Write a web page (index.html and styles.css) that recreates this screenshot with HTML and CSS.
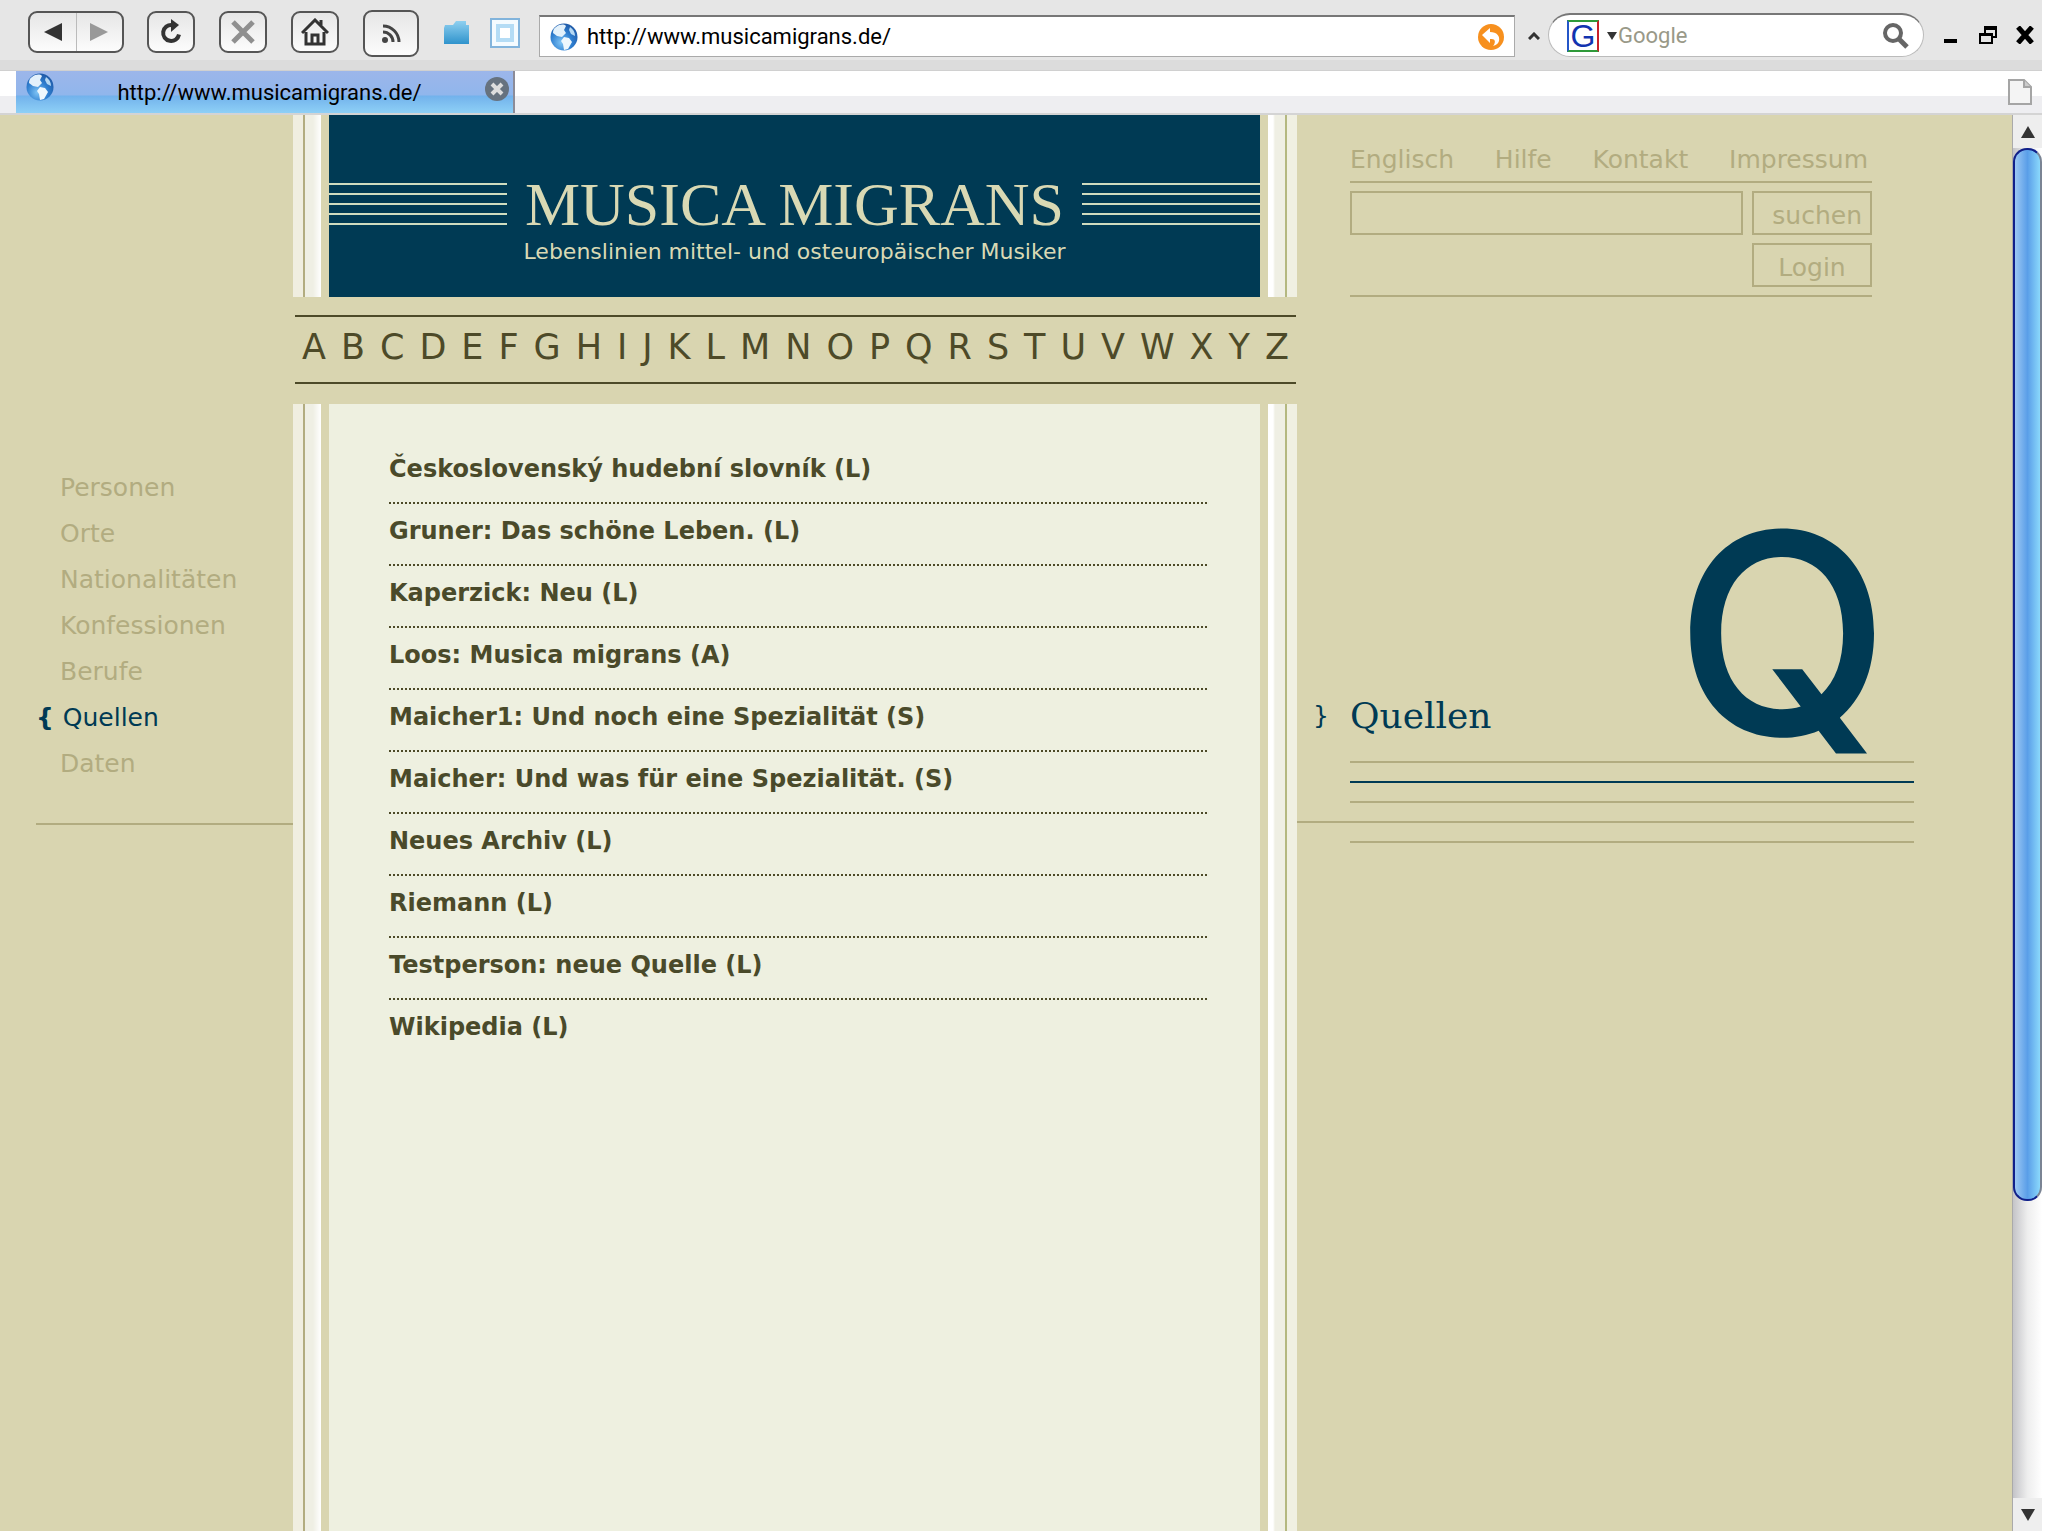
FILE: index.html
```
<!DOCTYPE html>
<html lang="de">
<head>
    <meta charset="UTF-8">
    <meta name="viewport" content="width=device-width, initial-scale=1.0">
    <title>Musica Migrans - Quellen</title>
    <link rel="stylesheet" href="styles.css">
</head>
<body>
    <!-- shared globe icon -->
    <svg class="defs" width="0" height="0" aria-hidden="true">
        <defs>
            <radialGradient id="globeFill" cx="0.4" cy="0.7" r="0.8">
                <stop offset="0" stop-color="#7fc4f5"/>
                <stop offset="0.5" stop-color="#2f7fd0"/>
                <stop offset="1" stop-color="#1a4f9c"/>
            </radialGradient>
            <linearGradient id="folderFill" x1="0" y1="0" x2="0" y2="1">
                <stop offset="0" stop-color="#8fd0f0"/>
                <stop offset="1" stop-color="#2f93cc"/>
            </linearGradient>
            <symbol id="globe" viewBox="0 0 28 28">
                <circle cx="14" cy="14" r="13.5" fill="url(#globeFill)"/>
                <path d="M6 4c4-3 8-3 10-1l-2 4 2 3-4 4-5-1-4-3c0-3 1-5 3-6z" fill="#e3f1fb"/>
                <path d="M14 14l5 1 3 4-4 7-4 1-1-6-2-3z" fill="#eef7fd"/>
                <path d="M20 4c3 2 5 5 5 9l-4-2-2-4z" fill="#b5d8f3"/>
            </symbol>
        </defs>
    </svg>

    <div class="toolbar">
        <div class="nav-group">
            <button type="button" aria-label="Back"><svg width="18" height="18" viewBox="0 0 18 18"><path d="M0 9L18 0v18z" fill="#333"/></svg></button>
            <button type="button" aria-label="Forward"><svg width="18" height="18" viewBox="0 0 18 18"><path d="M18 9L0 0v18z" fill="#999"/></svg></button>
        </div>
        <button type="button" class="tool" aria-label="Reload">
            <svg width="24" height="26" viewBox="0 0 24 26"><path d="M20 15.500A8 8 0 1 1 13 6" fill="none" stroke="#333" stroke-width="4"/><path d="M12 0l8 6-8 7z" fill="#333"/></svg>
        </button>
        <button type="button" class="tool" aria-label="Stop">
            <svg width="24" height="24" viewBox="0 0 24 24"><path d="M2 2l20 20M22 2L2 22" stroke="#8f8f8f" stroke-width="5"/></svg>
        </button>
        <button type="button" class="tool" aria-label="Home">
            <svg width="28" height="28" viewBox="0 0 28 28" fill="none" stroke="#333" stroke-width="3"><path d="M1 15L14 2l13 13M5 14v12h18V14M11 26v-9h6v9M20 7V2"/></svg>
        </button>
        <button type="button" class="tool feed" aria-label="Feeds">
            <svg width="20" height="20" viewBox="0 0 20 20" fill="none" stroke="#444" stroke-width="3"><path d="M2 2a16 16 0 0 1 16 16M2 8a10 10 0 0 1 10 10"/><circle cx="4" cy="16" r="3" fill="#444" stroke="none"/></svg>
        </button>
        <button type="button" class="plain" aria-label="Bookmarks">
            <svg width="28" height="26" viewBox="0 0 28 26"><path d="M2 5h8l3-4h10v4h3v19H1V8z" fill="url(#folderFill)"/></svg>
        </button>
        <button type="button" class="plain" aria-label="Panel">
            <svg width="32" height="32" viewBox="0 0 32 32"><path d="M2 2h28v28H2z" fill="#f4fbff" stroke="#82b4dc" stroke-width="2"/><path d="M9 9h14v14H9z" fill="#fff" stroke="#b4dcf5" stroke-width="4"/></svg>
        </button>
        <div class="address">
            <svg width="28" height="28"><use href="#globe"/></svg>
            <input type="text" aria-label="Address" value="http://www.musicamigrans.de/">
            <button type="button" aria-label="Go">
                <svg width="26" height="26" viewBox="0 0 26 26"><circle cx="13" cy="13" r="13" fill="#f7901e"/><path d="M4 11l8-7v4c7 0 10 4 9 9-1 3-3 4-6 5 2-2 4-8-3-7v4z" fill="#fff"/></svg>
            </button>
        </div>
        <svg class="caret" width="12" height="8" viewBox="0 0 12 8"><path d="M1 7l5-5 5 5" fill="none" stroke="#333" stroke-width="3"/></svg>
        <div class="search">
            <span class="engine">G</span>
            <svg width="10" height="8" viewBox="0 0 10 8"><path d="M0 0h10L5 8z" fill="#333"/></svg>
            <input type="text" aria-label="Search" placeholder="Google">
            <svg width="26" height="26" viewBox="0 0 26 26" fill="none" stroke="#666"><circle cx="10" cy="10" r="8" stroke-width="4"/><path d="M16 16l8 8" stroke-width="5"/></svg>
        </div>
        <div class="window-buttons">
            <button type="button" aria-label="Minimize"><svg width="18" height="18" viewBox="0 0 18 18"><path d="M2 13h13v4H2z"/></svg></button>
            <button type="button" aria-label="Restore"><svg width="18" height="18" viewBox="0 0 18 18"><path d="M6 8V2h11v9h-4" fill="none" stroke="#000" stroke-width="2"/><path d="M5 0h13v4H5z"/><path d="M1 8h12v9H1z" fill="none" stroke="#000" stroke-width="2"/><path d="M0 7h14v3H0z"/></svg></button>
            <button type="button" aria-label="Close"><svg width="18" height="18" viewBox="0 0 18 18"><path d="M2 1l14 16M16 1L2 17" stroke="#000" stroke-width="5"/></svg></button>
        </div>
    </div>

    <div class="tabs">
        <div class="tab">
            <svg width="28" height="28"><use href="#globe"/></svg>
            <span>http://www.musicamigrans.de/</span>
            <button type="button" aria-label="Close tab">
                <svg width="24" height="24" viewBox="0 0 24 24"><circle cx="12" cy="12" r="12" fill="#66727f"/><path d="M7 7l10 10M17 7L7 17" stroke="#ddd" stroke-width="4"/></svg>
            </button>
        </div>
        <svg width="24" height="26" viewBox="0 0 24 26"><path d="M1 1h15l7 7v17H1z" fill="#f4f4f4" stroke="#a5a5a5" stroke-width="2"/><path d="M16 1v7h7" fill="#ccc" stroke="#a5a5a5" stroke-width="2"/></svg>
    </div>

    <div class="viewport">
        <div class="page">
            <nav class="sidebar">
                <ul>
                    <li><a href="#">Personen</a></li>
                    <li><a href="#">Orte</a></li>
                    <li><a href="#">Nationalitäten</a></li>
                    <li><a href="#">Konfessionen</a></li>
                    <li><a href="#">Berufe</a></li>
                    <li class="active"><b>{</b><a href="#">Quellen</a></li>
                    <li><a href="#">Daten</a></li>
                </ul>
            </nav>

            <main class="center">
                <div class="frame">
                    <header class="banner">
                        <div class="title-row">
                            <div class="staff"><i></i><i></i><i></i><i></i><i></i></div>
                            <h1>MUSICA MIGRANS</h1>
                            <div class="staff"><i></i><i></i><i></i><i></i><i></i></div>
                        </div>
                        <p>Lebenslinien mittel- und osteuropäischer Musiker</p>
                    </header>
                </div>

                <nav class="alphabet">
                    <a href="#">A</a><a href="#">B</a><a href="#">C</a><a href="#">D</a><a href="#">E</a><a href="#">F</a><a href="#">G</a><a href="#">H</a><a href="#">I</a><a href="#">J</a><a href="#">K</a><a href="#">L</a><a href="#">M</a><a href="#">N</a><a href="#">O</a><a href="#">P</a><a href="#">Q</a><a href="#">R</a><a href="#">S</a><a href="#">T</a><a href="#">U</a><a href="#">V</a><a href="#">W</a><a href="#">X</a><a href="#">Y</a><a href="#">Z</a>
                </nav>

                <div class="frame grow">
                    <ul class="sources">
                        <li><a href="#">Československý hudební slovník (L)</a></li>
                        <li><a href="#">Gruner: Das schöne Leben. (L)</a></li>
                        <li><a href="#">Kaperzick: Neu (L)</a></li>
                        <li><a href="#">Loos: Musica migrans (A)</a></li>
                        <li><a href="#">Maicher1: Und noch eine Spezialität (S)</a></li>
                        <li><a href="#">Maicher: Und was für eine Spezialität. (S)</a></li>
                        <li><a href="#">Neues Archiv (L)</a></li>
                        <li><a href="#">Riemann (L)</a></li>
                        <li><a href="#">Testperson: neue Quelle (L)</a></li>
                        <li><a href="#">Wikipedia (L)</a></li>
                    </ul>
                </div>
            </main>

            <aside class="right">
                <div class="tools">
                    <nav>
                        <a href="#">Englisch</a>
                        <a href="#">Hilfe</a>
                        <a href="#">Kontakt</a>
                        <a href="#">Impressum</a>
                    </nav>
                    <form>
                        <input type="text" aria-label="Suche">
                        <button type="button" class="submit">suchen</button>
                        <button type="button" class="login">Login</button>
                    </form>
                </div>

                <div class="section">
                    <span class="brace">}</span>
                    <h2>Quellen</h2>
                    <span class="initial">Q</span>
                </div>
                <div class="lines"><i></i><i class="on"></i><i></i><i class="long"></i><i></i></div>
            </aside>
        </div>

        <div class="scrollbar">
            <button type="button" aria-label="Scroll up"><svg width="14" height="12" viewBox="0 0 14 12"><path d="M7 0l7 12H0z" fill="#333"/></svg></button>
            <div class="track"><div class="thumb"></div></div>
            <button type="button" aria-label="Scroll down"><svg width="14" height="12" viewBox="0 0 14 12"><path d="M0 0h14L7 12z" fill="#333"/></svg></button>
        </div>
    </div>
</body>
</html>
```
FILE: styles.css
```
* {
  box-sizing: border-box;
}

body {
  margin: 0;
  padding: 0 6px 5px 0;
  min-height: 100vh;
  display: flex;
  flex-direction: column;
  background: #fff;
  font-family: "DejaVu Sans", sans-serif;
  font-size: 25px;
}

.defs {
  position: absolute;
}

a {
  color: inherit;
  text-decoration: none;
}

ul, h1, h2, p {
  margin: 0;
  padding: 0;
  list-style: none;
  font-weight: normal;
}

button, input {
  font: inherit;
  color: inherit;
  margin: 0;
  padding: 0;
  border: 0;
  background: none;
}

button {
  display: flex;
  align-items: center;
  justify-content: center;
}

svg {
  display: block;
  flex: none;
}

/* Browser toolbar */
.toolbar {
  height: 71px;
  padding: 0 8px 6px 28px;
  display: flex;
  align-items: center;
  background: linear-gradient(#e6e6e6 0 60px, #dcdcdc 60px);
  border-bottom: 1px solid #d0d0d0;
  font-family: Roboto, sans-serif;
  font-size: 22px;
}

.nav-group,
.tool {
  height: 42px;
  border: 2px solid #555;
  border-radius: 9px;
  background: linear-gradient(#e6e6e6, #fcfcfc);
}

.nav-group {
  width: 96px;
  display: flex;
  margin-right: 23px;
}
.nav-group button {
  flex: 1;
}
.nav-group button + button {
  border-left: 1px solid #bbb;
}

.tool {
  width: 48px;
  margin-right: 24px;
}
.tool.feed {
  width: 56px;
  height: 47px;
  margin-top: 3px;
}

.plain {
  margin-top: 2px;
  margin-right: 18px;
}

.address {
  flex: 1;
  height: 42px;
  margin-top: 8px;
  padding: 0 10px;
  display: flex;
  align-items: center;
  gap: 9px;
  background: #fff;
  border: 1px solid #aaa;
  border-top: 2px solid #777;
}
.address input {
  flex: 1;
  min-width: 0;
}

.caret {
  margin: 8px 8px 0 13px;
}

.search {
  width: 376px;
  height: 44px;
  margin-top: 6px;
  padding: 0 14px 0 18px;
  display: flex;
  align-items: center;
  gap: 8px;
  background: #fff;
  border: 1px solid #bbb;
  border-top: 2px solid #777;
  border-radius: 22px;
}
.search input {
  flex: 1;
  min-width: 0;
  margin-left: -7px;
}
.search input::placeholder {
  color: #999988;
  opacity: 1;
}

.engine {
  width: 32px;
  height: 32px;
  border: 2px solid;
  border-color: #2f9a3a #c8202a #2f9a3a #2456c8;
  color: #1233b0;
  font: 32px/28px "Liberation Sans", sans-serif;
  text-align: center;
}

.window-buttons {
  display: flex;
  gap: 19px;
  margin: 6px 0 0 18px;
}

/* Tab strip */
.tabs {
  height: 44px;
  padding: 0 10px 0 16px;
  display: flex;
  justify-content: space-between;
  background: linear-gradient(#fff 0 25px, #eeeef1 25px);
  border-bottom: 2px solid #d4d4d4;
}
.tabs > svg {
  margin-top: 8px;
}

.tab {
  width: 499px;
  padding: 0 4px 0 10px;
  display: flex;
  justify-content: space-between;
  background: linear-gradient(#9cb6ea, #90b6ec 24px, #72b2ec 25px, #8ed0f6);
  border-right: 2px solid #8c8c98;
  font: 22px/44px Roboto, sans-serif;
}
.tab > svg {
  margin-top: 2px;
}
.tab button {
  height: 36px;
}

/* Web page */
.viewport {
  flex: 1;
  display: flex;
}

.page {
  flex: 1;
  display: grid;
  grid-template-columns: 293px minmax(0, 1004px) minmax(0, 1fr);
  background: #d9d5b0;
  color: #b2ac80;
}

.sidebar {
  padding: 350px 0 0 36px;
}
.sidebar ul {
  padding: 0 0 36px 24px;
  border-bottom: 2px solid #b2ac80;
}
.sidebar li {
  line-height: 46px;
}
.sidebar .active {
  display: flex;
  gap: 9px;
  margin-left: -24px;
  color: #003a54;
}

.center {
  display: flex;
  flex-direction: column;
}

/* white pillars on both sides of a block */
.frame {
  padding: 0 37px 0 36px;
  background:
    linear-gradient(90deg, #f0eee0 10px, #b2ac80 10px 12px, #efefe4 12px 20px, #fff) left / 28px 100% no-repeat,
    linear-gradient(270deg, #f0f0e2 10px, #b4b880 10px 12px, #efefe4 12px 22px, #fff 24px) right / 29px 100% no-repeat;
}
.frame.grow {
  flex: 1;
}

.banner {
  height: 182px;
  padding-top: 54px;
  background: #003a54;
  color: #d9d9b4;
  text-align: center;
}
.banner p {
  font-size: 22px;
  line-height: 26px;
}

.title-row {
  display: flex;
  align-items: center;
  gap: 18px;
}
.title-row h1 {
  font: 62px/70px "Liberation Serif", serif;
}

.staff {
  flex: 1;
  display: grid;
  gap: 8px;
}
.staff i {
  height: 2px;
  background: #cfdcc0;
}

.alphabet {
  margin: 18px 1px 20px 2px;
  padding: 0 7px 5px;
  display: flex;
  justify-content: space-between;
  border-top: 2px solid #4d4a28;
  border-bottom: 2px solid #4d4a28;
  color: #4d4a28;
  font-size: 35px;
  line-height: 60px;
}

.sources {
  height: 100%;
  padding: 38px 53px 0 60px;
  background: #eef0e0;
  color: #4a4a2a;
  font-size: 24px;
  font-weight: bold;
}
.sources li {
  padding-bottom: 6px;
  line-height: 54px;
  border-bottom: 2px dotted #4d4a28;
}
.sources li:last-child {
  border-bottom: 0;
}

/* Right column */
.right {
  padding-right: 98px;
}

.tools {
  margin: 0 42px 0 53px;
  padding-bottom: 8px;
  border-bottom: 2px solid #b2ac80;
}
.tools nav {
  padding: 24px 4px 0 0;
  display: flex;
  justify-content: space-between;
  line-height: 42px;
}
.tools form {
  padding-top: 8px;
  display: grid;
  grid-template-columns: 1fr 120px;
  gap: 8px 9px;
  border-top: 2px solid #b2ac80;
}
.tools input,
.tools button {
  height: 44px;
  border: 2px solid #b2ac80;
}
.tools .submit {
  justify-content: flex-end;
  padding: 4px 8px 0 0;
}
.tools .login {
  grid-column: 2;
  padding-top: 4px;
}

.section {
  height: 464px;
  padding-left: 16px;
  display: flex;
  align-items: flex-end;
  color: #003a54;
}
.section h2 {
  flex: 1;
  font: 36px/42px "DejaVu Serif", serif;
  margin-bottom: 24px;
}
.section .brace {
  width: 37px;
  line-height: 42px;
  margin-bottom: 24px;
}
.section .initial {
  margin-right: 24px;
  font: 500 280px/254px "Inter", sans-serif;
}

.lines {
  display: grid;
  gap: 18px;
}
.lines i {
  height: 2px;
  margin-left: 53px;
  background: #b2ac80;
}
.lines .on {
  background: #003a54;
}
.lines .long {
  margin-left: 0;
}

/* Scrollbar */
.scrollbar {
  width: 30px;
  display: flex;
  flex-direction: column;
  border-left: 1px solid #aaa;
  background: #eee;
}
.scrollbar button {
  height: 33px;
}
.track {
  flex: 1;
  background: linear-gradient(90deg, #c4c4c8, #eee 50%, #fff);
}
.thumb {
  height: 78%;
  border: 2px solid #10208a;
  border-right-color: #7a8494;
  border-radius: 14px;
  background: linear-gradient(90deg, #9cc8f4, #5a9ee8 50%, #8ad8fc);
}
```
